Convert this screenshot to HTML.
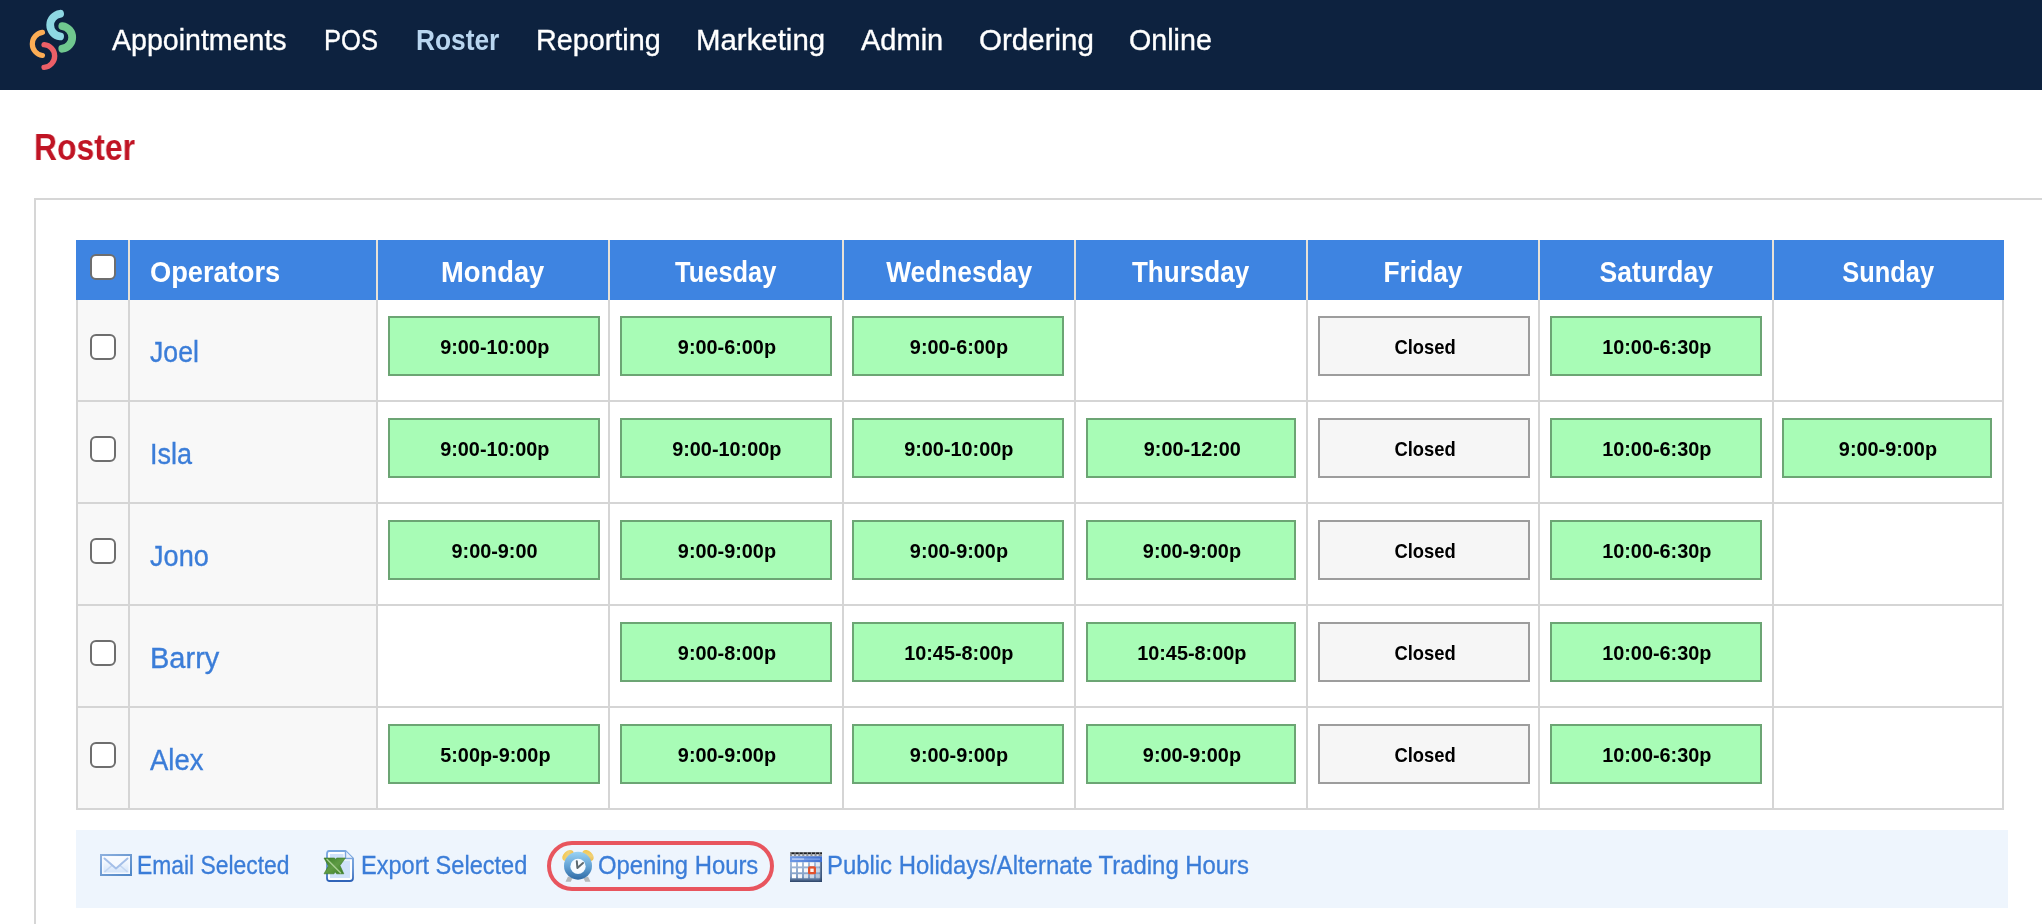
<!DOCTYPE html>
<html lang="en">
<head>
<meta charset="utf-8">
<title>Roster</title>
<style>
*{box-sizing:border-box;margin:0;padding:0}
html,body{width:2042px;height:924px;overflow:hidden;background:#fff}
body{position:relative;font-family:"Liberation Sans",Arial,sans-serif;color:#000}
a{text-decoration:none;color:inherit}
#w{position:absolute;left:0;top:0;width:2042px;height:924px;overflow:hidden;will-change:transform}

/* ---------- top navigation ---------- */
#nav{position:absolute;left:0;top:0;width:2042px;height:90px;background:#0d223f}
#logo{position:absolute;left:20px;top:0;width:70px;height:80px}
#nav a{position:absolute;transform-origin:0 28px;top:22px;height:36px;line-height:36px;font-size:30px;color:#fff;white-space:nowrap;-webkit-text-stroke:.35px #fff}
#nav a.on{color:#b9d6f0;font-weight:bold;-webkit-text-stroke:0}

/* ---------- page title ---------- */
h1{position:absolute;transform-origin:0 50%;left:34px;top:126px;height:44px;line-height:44px;font-size:36px;font-weight:bold;color:#c01424;white-space:nowrap}

/* ---------- panel ---------- */
#panel{position:absolute;left:34px;top:198px;width:2100px;height:800px;border:2px solid #d6d6d6;background:#fff}

/* ---------- roster table ---------- */
#roster{position:absolute;left:76px;top:240px;width:1928px;table-layout:fixed;border-collapse:separate;border-spacing:0}
#roster th,#roster td{border-right:2px solid #d5d5d5;border-bottom:2px solid #d5d5d5;vertical-align:top;overflow:hidden}
#roster th{height:60px;background:#3e84e1;color:#fff;font-size:30px;font-weight:bold;line-height:57px;padding-top:3px;text-align:center;border-bottom:0;border-right-color:#e8e1d6;white-space:nowrap}
#roster th:first-child{border-left:2px solid #3e84e1}
#roster th:last-child{border-right-color:#3e84e1}
#roster th.op{text-align:left;padding-left:20px}
#roster th span{display:inline-block;transform-origin:50% 50%}
#roster th.op span{transform-origin:0 50%}
#roster td{height:102px;background:#fff}
#roster td:first-child{border-left:2px solid #d5d5d5}
#roster td.c,#roster td.n{background:#f8f8f8}
#roster td.n a{display:inline-block;transform-origin:0 50%;-webkit-text-stroke:.35px #3b7dd8}
#roster td.n{padding:4px 0 0 20px;font-size:29px;line-height:96px;color:#3b7dd8;white-space:nowrap}
.cb{display:block;width:26px;height:26px;border:2px solid #6e6e6e;border-radius:6px;background:#fff}
#roster th .cb{margin:11px 0 0 12px}
#roster td .cb{margin:34px 0 0 12px}
.s{display:block;margin:16px 0 0 10px;width:212px;height:60px;border:2px solid #6ca574;background:#a8fcb6;font-size:21px;font-weight:bold;line-height:58px;text-align:center;color:#000;white-space:nowrap}
.s b{display:inline-block;position:relative;left:1px;transform-origin:50% 50%;transform:scaleX(.945)}
.s.x{background:#f6f6f6;border-color:#9d9d9d}
.s.x b{transform:scaleX(.875)}
#roster td:nth-child(5) .s{margin-left:8px}
#roster td:nth-child(6) .s{width:210px}
#roster td:nth-child(9) .s{margin-left:8px;width:210px}

/* ---------- toolbar ---------- */
#bar{position:absolute;left:76px;top:830px;width:1932px;height:78px;background:#eef5fd}
#bar a{position:absolute;transform-origin:0 50%;top:19px;height:32px;line-height:32px;font-size:25px;color:#3b7dd8;white-space:nowrap;-webkit-text-stroke:.3px #3b7dd8}
#bar svg{position:absolute}
#pill{position:absolute;left:471px;top:11px;width:227px;height:50px;border:4px solid #e8555e;border-radius:25px}
</style>
</head>
<body>
<div id="w">

<div id="nav">
  <svg id="logo" viewBox="20 0 70 80" fill="none" stroke-linecap="round">
    <path d="M60.1 13.8 A11.4 11.4 0 0 0 60.1 36.4" stroke="#8ed8e3" stroke-width="7.8"/>
    <path d="M62.3 26.1 A11.4 11.4 0 0 1 62.3 48.7" stroke="#70c88f" stroke-width="7.8"/>
    <path d="M42.45 32.4 A11.65 11.65 0 0 0 42.45 55.5" stroke="#fbad55" stroke-width="5.2"/>
    <path d="M44.05 44.6 A11.43 11.43 0 0 1 44.05 67.4" stroke="#ec5f67" stroke-width="5.4"/>
  </svg>
  <a style="left:111.8px;transform:scaleX(0.952)">Appointments</a>
  <a style="left:323.6px;transform:scaleX(0.852)">POS</a>
  <a style="left:416.0px;transform:scaleX(0.877)" class="on">Roster</a>
  <a style="left:535.5px;transform:scaleX(0.959)">Reporting</a>
  <a style="left:695.7px;transform:scaleX(0.98)">Marketing</a>
  <a style="left:861.2px;transform:scaleX(0.967)">Admin</a>
  <a style="left:978.8px;transform:scaleX(0.984)">Ordering</a>
  <a style="left:1128.6px;transform:scaleX(0.955)">Online</a>
</div>

<h1 style="transform:scaleX(.886)">Roster</h1>

<div id="panel"></div>

<table id="roster">
  <colgroup>
    <col style="width:54px"><col style="width:248px"><col style="width:232px"><col style="width:234px"><col style="width:232px"><col style="width:232px"><col style="width:232px"><col style="width:234px"><col style="width:230px">
  </colgroup>
  <thead>
    <tr>
      <th><i class="cb"></i></th>
      <th class="op"><span style="transform:scaleX(0.908)">Operators</span></th>
      <th><span style="transform:scaleX(0.911)">Monday</span></th>
      <th><span style="transform:scaleX(0.848)">Tuesday</span></th>
      <th><span style="transform:scaleX(0.878)">Wednesday</span></th>
      <th><span style="transform:scaleX(0.868)">Thursday</span></th>
      <th><span style="transform:scaleX(0.877)">Friday</span></th>
      <th><span style="transform:scaleX(0.883)">Saturday</span></th>
      <th><span style="transform:scaleX(0.847)">Sunday</span></th>
    </tr>
  </thead>
  <tbody>
    <tr>
      <td class="c"><i class="cb"></i></td>
      <td class="n"><a style="transform:scaleX(0.919)">Joel</a></td>
      <td><span class="s"><b>9:00-10:00p</b></span></td>
      <td><span class="s"><b>9:00-6:00p</b></span></td>
      <td><span class="s"><b>9:00-6:00p</b></span></td>
      <td></td>
      <td><span class="s x"><b>Closed</b></span></td>
      <td><span class="s"><b>10:00-6:30p</b></span></td>
      <td></td>
    </tr>
    <tr>
      <td class="c"><i class="cb"></i></td>
      <td class="n"><a style="transform:scaleX(0.932)">Isla</a></td>
      <td><span class="s"><b>9:00-10:00p</b></span></td>
      <td><span class="s"><b>9:00-10:00p</b></span></td>
      <td><span class="s"><b>9:00-10:00p</b></span></td>
      <td><span class="s"><b>9:00-12:00</b></span></td>
      <td><span class="s x"><b>Closed</b></span></td>
      <td><span class="s"><b>10:00-6:30p</b></span></td>
      <td><span class="s"><b>9:00-9:00p</b></span></td>
    </tr>
    <tr>
      <td class="c"><i class="cb"></i></td>
      <td class="n"><a style="transform:scaleX(0.935)">Jono</a></td>
      <td><span class="s"><b>9:00-9:00</b></span></td>
      <td><span class="s"><b>9:00-9:00p</b></span></td>
      <td><span class="s"><b>9:00-9:00p</b></span></td>
      <td><span class="s"><b>9:00-9:00p</b></span></td>
      <td><span class="s x"><b>Closed</b></span></td>
      <td><span class="s"><b>10:00-6:30p</b></span></td>
      <td></td>
    </tr>
    <tr>
      <td class="c"><i class="cb"></i></td>
      <td class="n"><a style="transform:scaleX(1.0)">Barry</a></td>
      <td></td>
      <td><span class="s"><b>9:00-8:00p</b></span></td>
      <td><span class="s"><b>10:45-8:00p</b></span></td>
      <td><span class="s"><b>10:45-8:00p</b></span></td>
      <td><span class="s x"><b>Closed</b></span></td>
      <td><span class="s"><b>10:00-6:30p</b></span></td>
      <td></td>
    </tr>
    <tr>
      <td class="c"><i class="cb"></i></td>
      <td class="n"><a style="transform:scaleX(0.947)">Alex</a></td>
      <td><span class="s"><b>5:00p-9:00p</b></span></td>
      <td><span class="s"><b>9:00-9:00p</b></span></td>
      <td><span class="s"><b>9:00-9:00p</b></span></td>
      <td><span class="s"><b>9:00-9:00p</b></span></td>
      <td><span class="s x"><b>Closed</b></span></td>
      <td><span class="s"><b>10:00-6:30p</b></span></td>
      <td></td>
    </tr>
  </tbody>
</table>

<div id="bar">
  <svg style="left:24px;top:24px" width="32" height="22" viewBox="0 0 32 22">
    <defs>
      <linearGradient id="g1" x1="0" y1="0" x2="1" y2="1"><stop offset="0" stop-color="#8db0de"/><stop offset="1" stop-color="#4f86c6"/></linearGradient>
      <linearGradient id="g2" x1="0" y1="0" x2="0" y2="1"><stop offset="0" stop-color="#ffffff"/><stop offset="1" stop-color="#d3e4fa"/></linearGradient>
    </defs>
    <rect x="1" y="1" width="30" height="20" fill="#f5f9ff" stroke="url(#g1)" stroke-width="2"/>
    <rect x="3.5" y="3.5" width="25" height="15" fill="url(#g2)"/>
    <path d="M4.5 18 L12.5 11 M27.5 18 L19.5 11" stroke="#c3d6f1" stroke-width="1.6" fill="none"/>
    <path d="M4 4 L16 14.5 L28 4 Z" fill="#f6faff"/>
    <path d="M4.5 4.5 L16 14.5 L27.5 4.5" fill="none" stroke="#a4bfe8" stroke-width="2" stroke-linejoin="round" stroke-linecap="round"/>
  </svg>
  <svg style="left:247px;top:19px" width="32" height="34" viewBox="0 0 32 34">
    <defs>
      <linearGradient id="g3" x1="0" y1="0" x2="0" y2="1"><stop offset="0" stop-color="#7aa8e0"/><stop offset=".6" stop-color="#5a8dd2"/><stop offset="1" stop-color="#2f63b8"/></linearGradient>
      <linearGradient id="g4" x1="0" y1="0" x2="1" y2="1"><stop offset="0" stop-color="#3b7f27"/><stop offset=".5" stop-color="#5f9c45"/><stop offset="1" stop-color="#377a24"/></linearGradient>
    </defs>
    <path d="M6 2 H22.5 L30 9.5 V29 Q30 32 27 32 H6 Q4 32 4 29 V5 Q4 2 6 2 Z" fill="#fdfeff" stroke="url(#g3)" stroke-width="1.8" stroke-linejoin="round"/>
    <path d="M7 5 H20.5 V11.5 H27 V29 H7 Z" fill="#cfe2fa"/>
    <path d="M22.5 2 V9.5 H30" fill="#e8f1fd" stroke="#7ea6de" stroke-width="1.4" stroke-linejoin="round"/>
    <path d="M1 9 H11.6 L12.6 10.8 L13.6 9 H22.4 L17 16.6 L20.8 24.8 H13.6 L12.3 22.8 L11 24.8 H1 L5.4 17 Z" fill="url(#g4)" stroke="#3a7a28" stroke-width=".6" stroke-linejoin="round"/>
    <path d="M4 10.2 L17.5 23.8" stroke="#b4d8a0" stroke-width="1.5" stroke-linecap="round" opacity=".85"/>
  </svg>
  <svg style="left:485px;top:19px" width="34" height="34" viewBox="0 0 34 34">
    <defs>
      <linearGradient id="g5" x1="0" y1="0" x2="0" y2="1"><stop offset="0" stop-color="#9bd3f4"/><stop offset=".55" stop-color="#5f9fd2"/><stop offset="1" stop-color="#2f6aa3"/></linearGradient>
      <radialGradient id="g6" cx=".5" cy=".45" r=".6"><stop offset="0" stop-color="#ffffff"/><stop offset=".8" stop-color="#f2f9ff"/><stop offset="1" stop-color="#cfe6f8"/></radialGradient>
      <linearGradient id="g7" x1="0" y1="0" x2="1" y2="1"><stop offset="0" stop-color="#f6c33c"/><stop offset=".5" stop-color="#f0d27a"/><stop offset="1" stop-color="#eeb230"/></linearGradient>
    </defs>
    <path d="M7 27.5 L4.5 32.8 H9.8 L11.5 29 Z M27 27.5 L29.5 32.8 H24.2 L22.5 29 Z" fill="#b5b8ba"/>
    <ellipse cx="7" cy="6.5" rx="6.6" ry="4.3" transform="rotate(-42 7 6.5)" fill="url(#g7)"/>
    <ellipse cx="27" cy="6.5" rx="6.6" ry="4.3" transform="rotate(42 27 6.5)" fill="url(#g7)"/>
    <circle cx="17" cy="16.7" r="14" fill="url(#g5)"/>
    <circle cx="17" cy="17.4" r="7.7" fill="url(#g6)"/>
    <path d="M15.8 12.2 L16.4 19 L22 14" fill="none" stroke="#5d6a70" stroke-width="2" stroke-linejoin="round" stroke-linecap="round"/>
  </svg>
  <svg style="left:714px;top:22px" width="32" height="30" viewBox="0 0 32 30">
    <defs>
      <linearGradient id="g8" x1="0" y1="0" x2="0" y2="1"><stop offset="0" stop-color="#a9bfdc"/><stop offset=".75" stop-color="#7f9cc4"/><stop offset="1" stop-color="#2a4266"/></linearGradient>
      <linearGradient id="g9" x1="0" y1="0" x2="1" y2="0"><stop offset="0" stop-color="#6f9ae6"/><stop offset="1" stop-color="#3f6fd0"/></linearGradient>
      <linearGradient id="g10" x1="0" y1="0" x2="1" y2="0"><stop offset=".9" stop-color="#2a4266" stop-opacity="0"/><stop offset="1" stop-color="#2a4266" stop-opacity=".9"/></linearGradient>
    </defs>
    <rect x="0" y="0" width="32" height="4.5" fill="#8d8f92"/>
    <path d="M1.5 .4 h3 v1.6 h-3z M5.6 .4 h3 v1.6 h-3z M9.7 .4 h3 v1.6 h-3z M13.8 .4 h3 v1.6 h-3z M17.9 .4 h3 v1.6 h-3z M22 .4 h3 v1.6 h-3z M26.1 .4 h3 v1.6 h-3z M30.2 .4 h1.8 v1.6 h-1.8z" fill="#1d1f22"/>
    <path d="M2 2.6 h2 v1.5 h-2z M6.1 2.6 h2 v1.5 h-2z M10.2 2.6 h2 v1.5 h-2z M14.3 2.6 h2 v1.5 h-2z M18.4 2.6 h2 v1.5 h-2z M22.5 2.6 h2 v1.5 h-2z M26.6 2.6 h2 v1.5 h-2z" fill="#dfe3e8"/>
    <rect x="0" y="4.3" width="32" height="6" fill="url(#g9)"/>
    <rect x="2" y="6.3" width="12" height="1.6" fill="#b9cdf5"/>
    <rect x="14" y="6.6" width="16" height="1" fill="#8fb0ee"/>
    <rect x="0" y="10" width="32" height="20" fill="url(#g8)"/>
    <rect x="0" y="10" width="32" height="20" fill="url(#g10)"/>
    <g fill="#ffffff">
      <rect x="2" y="10.4" width="4" height="4"/><rect x="8" y="10.4" width="4" height="4"/><rect x="14" y="10.4" width="4" height="4"/><rect x="20" y="10.4" width="4" height="4" opacity=".9"/><rect x="26" y="10.4" width="4" height="4" opacity=".7"/>
      <rect x="2" y="16.3" width="4" height="4"/><rect x="8" y="16.3" width="4" height="4"/><rect x="14" y="16.3" width="4" height="4" opacity=".9"/><rect x="26" y="16.3" width="4" height="4" opacity=".5"/>
      <rect x="2" y="22.2" width="4" height="4"/><rect x="8" y="22.2" width="4" height="4" opacity=".9"/><rect x="14" y="22.2" width="4" height="4" opacity=".7"/><rect x="20" y="22.2" width="4" height="4" opacity=".6"/><rect x="26" y="22.2" width="4" height="4" opacity=".4"/>
    </g>
    <rect x="18" y="14.3" width="8" height="8" rx="1.6" fill="#e2512c"/>
    <rect x="20.3" y="16.6" width="3.4" height="3.4" fill="#fdf3ee"/>
  </svg>
  <a style="left:61.3px;transform:scaleX(0.914)">Email Selected</a>
  <a style="left:285.2px;transform:scaleX(0.942)">Export Selected</a>
  <div id="pill"></div>
  <a style="left:521.8px;transform:scaleX(0.953)">Opening Hours</a>
  <a style="left:750.7px;transform:scaleX(0.955)">Public Holidays/Alternate Trading Hours</a>
</div>

</div>
</body>
</html>
